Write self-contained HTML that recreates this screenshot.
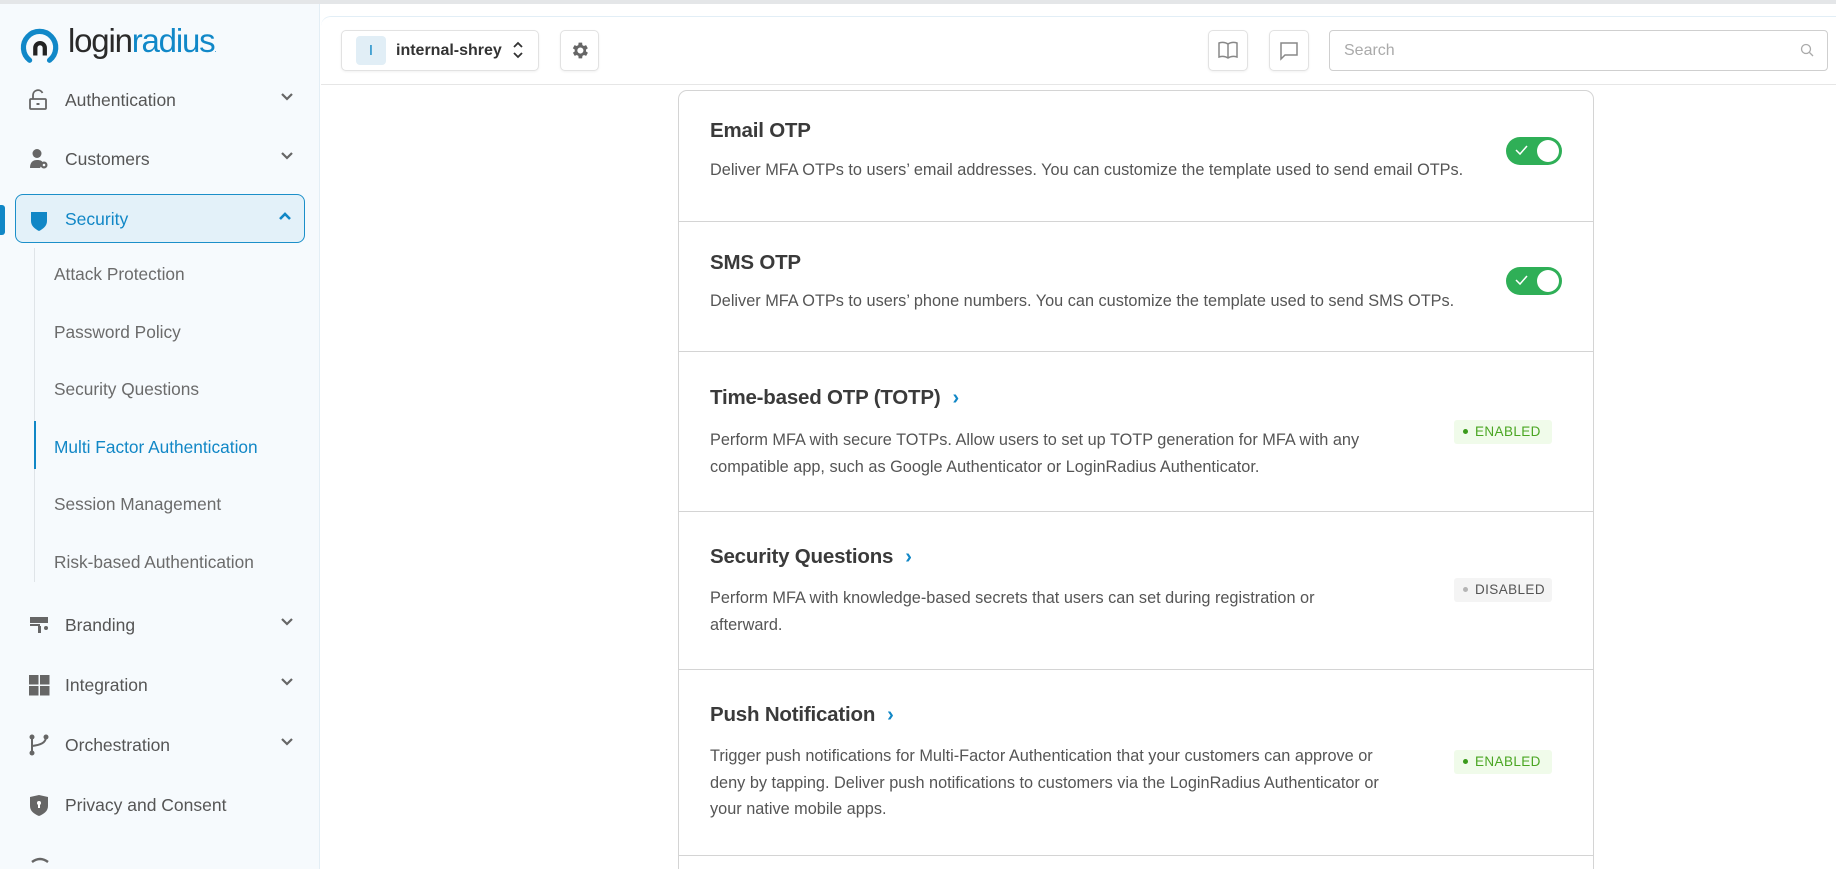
<!DOCTYPE html>
<html><head><meta charset="utf-8">
<style>
*{box-sizing:border-box;margin:0;padding:0}
html{width:1836px;height:869px;overflow:hidden}
body{width:1836px;height:869px;overflow:hidden;background:#fff;font-family:"Liberation Sans",sans-serif;position:relative;color:#3a3a3a}
.abs{position:absolute}
#topline{left:0;top:0;width:1836px;height:4px;background:#e4e6e8}
#side{left:0;top:4px;width:320px;height:865px;background:#f6fafd;border-right:1px solid #e3eef5}
.nav{position:absolute;left:0;width:320px;height:40px;display:flex;align-items:center;font-size:17.5px;color:#555}
.nav .ic{position:absolute;left:28px;top:9px;width:22px;height:22px}
.nav .tx{position:absolute;left:65px}
.nav .chev{position:absolute;left:280px;top:12px}
.sub{position:absolute;left:54px;font-size:17.3px;color:#6b6b6b}
#hdr{left:321px;top:16px;width:1515px;height:69px;background:#fff;border-top:1px solid #e2eef6;border-bottom:1px solid #e6e6e6;border-top-left-radius:10px}
.btn{position:absolute;border:1px solid #e2e2e2;border-radius:5px;background:#fff;box-shadow:0 1px 2px rgba(0,0,0,.06)}
#card{left:678px;top:90px;width:916px;height:790px;border:1px solid #d4d4d4;border-radius:9px;background:#fff}
.sep{position:absolute;left:678px;width:916px;height:1px;background:#d4d4d4}
.ttl{position:absolute;left:710px;font-size:20.5px;font-weight:bold;color:#3a3a3a;letter-spacing:-.2px}
.ttl .ar{color:#1187c6;font-size:20px;margin-left:12px;font-weight:bold}
.dsc{position:absolute;left:710px;font-size:16.3px;line-height:26.5px;color:#555;width:675px}
.tog{position:absolute;left:1506px;width:56px;height:28px;border-radius:14px;background:#2faf57}
.tog::after{content:"";position:absolute;right:3px;top:3px;width:22px;height:22px;border-radius:50%;background:#fff}
.tog svg{position:absolute;left:9px;top:8px}
.badge{position:absolute;left:1454px;width:98px;height:24px;border-radius:3px;font-size:13.5px;letter-spacing:.4px;line-height:24px;padding-left:9px}
.en{background:#f0fbea;color:#4aa622}
.en::before{content:"";display:inline-block;width:5px;height:5px;border-radius:50%;background:#3a9a1a;margin-right:7px;vertical-align:2px}
.di{background:#f4f4f4;color:#555}
.di::before{content:"";display:inline-block;width:5px;height:5px;border-radius:50%;background:#b5b5b5;margin-right:7px;vertical-align:2px}
</style></head><body>
<div id="topline" class="abs"></div>
<div id="side" class="abs"></div>

<svg class="abs" style="left:20px;top:27px" width="42" height="38" viewBox="0 0 44 40">
<path d="M10 35 A17 17 0 1 1 31 35" fill="none" stroke="#1188c8" stroke-width="5.5" stroke-linecap="round"/>
<path d="M16 30 V22 a5 5 0 0 1 10 0 V30" fill="none" stroke="#222" stroke-width="4.5"/>
</svg>
<div class="abs" style="left:68px;top:22px;font-size:33px;letter-spacing:-1.2px;color:#2a2a2a">login<span style="color:#1188c8">radius</span><span style="font-size:8px;color:#1188c8">.</span></div>

<div class="nav" style="top:80px"><svg class="ic" viewBox="0 0 22 22"><path d="M5 10V6a5 5 0 0 1 9.5-2" fill="none" stroke="#666" stroke-width="1.8"/><rect x="2" y="10" width="16" height="10" rx="1" fill="none" stroke="#666" stroke-width="1.8"/><rect x="8.5" y="14" width="3" height="2" fill="#666"/></svg><span class="tx">Authentication</span><svg class="chev" width="14" height="10"><path d="M2 2l5 5 5-5" fill="none" stroke="#666" stroke-width="2.2"/></svg></div>
<div class="nav" style="top:139px"><svg class="ic" viewBox="0 0 22 22"><circle cx="9" cy="5.5" r="4.5" fill="#666"/><path d="M2 20c0-6 3-8 7-8s5 1 6 3l-3 5z" fill="#666"/><circle cx="16" cy="17" r="3.5" fill="#666"/><circle cx="16" cy="17" r="1.3" fill="#f6fafd"/></svg><span class="tx">Customers</span><svg class="chev" width="14" height="10"><path d="M2 2l5 5 5-5" fill="none" stroke="#666" stroke-width="2.2"/></svg></div>
<div class="abs" style="left:0;top:205px;width:5px;height:30px;background:#1187c6;border-radius:0 3px 3px 0"></div>
<div class="abs" style="left:15px;top:194px;width:290px;height:49px;background:#e3f1f9;border:1px solid #1b8fc9;border-radius:8px"></div>
<div class="nav" style="top:199px;color:#1187c6"><svg class="ic" viewBox="0 0 22 22" style="top:10px"><path d="M3 3h16v9c0 5-4 8-8 10-4-2-8-5-8-10z" fill="#1187c6"/></svg><span class="tx">Security</span><svg class="chev" width="14" height="10" style="left:278px"><path d="M2 8l5-5 5 5" fill="none" stroke="#1187c6" stroke-width="2.6"/></svg></div>
<div class="abs" style="left:34px;top:248px;width:1px;height:334px;background:#dfe4e8"></div>
<div class="abs" style="left:34px;top:421px;width:2px;height:48px;background:#1187c6"></div>
<div class="sub" style="top:264px">Attack Protection</div>
<div class="sub" style="top:322px">Password Policy</div>
<div class="sub" style="top:379px">Security Questions</div>
<div class="sub" style="top:437px;color:#1187c6">Multi Factor Authentication</div>
<div class="sub" style="top:494px">Session Management</div>
<div class="sub" style="top:552px">Risk-based Authentication</div>
<div class="nav" style="top:605px"><svg class="ic" viewBox="0 0 22 22"><rect x="2" y="3" width="18" height="6" fill="#666"/><rect x="2" y="10" width="10" height="2" fill="#666"/><rect x="10" y="12" width="3" height="7" fill="#666"/><circle cx="18" cy="14" r="2" fill="#666"/></svg><span class="tx">Branding</span><svg class="chev" width="14" height="10"><path d="M2 2l5 5 5-5" fill="none" stroke="#666" stroke-width="2.2"/></svg></div>
<div class="nav" style="top:665px"><svg class="ic" viewBox="0 0 22 22"><rect x="1" y="1" width="9.5" height="9.5" fill="#666"/><rect x="12" y="1" width="9.5" height="9.5" fill="#666"/><rect x="1" y="12" width="9.5" height="9.5" fill="#666"/><rect x="12" y="12" width="9.5" height="9.5" fill="#666"/></svg><span class="tx">Integration</span><svg class="chev" width="14" height="10"><path d="M2 2l5 5 5-5" fill="none" stroke="#666" stroke-width="2.2"/></svg></div>
<div class="nav" style="top:725px"><svg class="ic" viewBox="0 0 22 22"><circle cx="4" cy="3" r="2.5" fill="#666"/><circle cx="4" cy="19" r="2.5" fill="#666"/><circle cx="18" cy="3" r="2.5" fill="#666"/><path d="M4 3v16M18 3c0 6-6 8-14 9" fill="none" stroke="#666" stroke-width="2"/></svg><span class="tx">Orchestration</span><svg class="chev" width="14" height="10"><path d="M2 2l5 5 5-5" fill="none" stroke="#666" stroke-width="2.2"/></svg></div>
<div class="nav" style="top:785px"><svg class="ic" viewBox="0 0 22 22"><path d="M2 3l9-2 9 2v9c0 5-4 8-9 10-5-2-9-5-9-10z" fill="#666"/><circle cx="11" cy="9" r="2" fill="#fff"/><rect x="10" y="9" width="2" height="5" fill="#fff"/></svg><span class="tx">Privacy and Consent</span></div>
<svg class="abs" style="left:30px;top:856px" width="20" height="8"><path d="M2 6 Q10 0 18 6" fill="none" stroke="#666" stroke-width="2.5"/></svg>

<div id="hdr" class="abs"></div>
<div class="btn" style="left:341px;top:30px;width:198px;height:41px"></div>
<div class="abs" style="left:356px;top:36px;width:30px;height:29px;background:#e1eef6;border-radius:4px;color:#1187c6;font-size:15px;text-align:center;line-height:29px">I</div>
<div class="abs" style="left:396px;top:42px;font-size:16px;font-weight:bold;color:#333">internal-shrey</div>
<svg class="abs" style="left:512px;top:40px" width="12" height="20"><path d="M2 7l4-4 4 4M2 13l4 4 4-4" fill="none" stroke="#333" stroke-width="1.8"/></svg>
<div class="btn" style="left:560px;top:30px;width:39px;height:41px"></div>
<svg class="abs" style="left:569px;top:40px" width="21" height="21" viewBox="0 0 24 24"><path fill="#666" d="M19.4 13a7.5 7.5 0 0 0 0-2l2.1-1.6-2-3.5-2.5 1a7.6 7.6 0 0 0-1.7-1L15 3h-4l-.4 2.9a7.6 7.6 0 0 0-1.7 1l-2.5-1-2 3.5L6.6 11a7.5 7.5 0 0 0 0 2l-2.1 1.6 2 3.5 2.5-1a7.6 7.6 0 0 0 1.7 1L11 21h4l.4-2.9a7.6 7.6 0 0 0 1.7-1l2.5 1 2-3.5zM13 15.5a3.5 3.5 0 1 1 0-7 3.5 3.5 0 0 1 0 7z"/></svg>
<div class="btn" style="left:1208px;top:30px;width:40px;height:41px"></div>
<svg class="abs" style="left:1217px;top:40px" width="22" height="20" viewBox="0 0 22 20"><path d="M11 4C8 2 5 2 2 3v14c3-1 6-1 9 1 3-2 6-2 9-1V3c-3-1-6-1-9 1zM11 4v14" fill="none" stroke="#888" stroke-width="1.5"/></svg>
<div class="btn" style="left:1269px;top:30px;width:40px;height:41px"></div>
<svg class="abs" style="left:1279px;top:41px" width="20" height="20" viewBox="0 0 20 20"><path d="M2 2h16v12H6l-4 4z" fill="none" stroke="#888" stroke-width="1.5"/></svg>
<div class="abs" style="left:1329px;top:30px;width:499px;height:41px;border:1px solid #cfcfcf;border-radius:4px"></div>
<div class="abs" style="left:1344px;top:42px;font-size:16px;color:#aaa">Search</div>
<svg class="abs" style="left:1800px;top:43px" width="14" height="14"><circle cx="6" cy="6" r="4.5" fill="none" stroke="#aaa" stroke-width="1.3"/><path d="M9.5 9.5l3.5 3.5" stroke="#aaa" stroke-width="1.3"/></svg>

<div id="card" class="abs"></div>
<div class="sep" style="top:221px"></div>
<div class="sep" style="top:351px"></div>
<div class="sep" style="top:511px"></div>
<div class="sep" style="top:669px"></div>
<div class="sep" style="top:855px"></div>

<div class="ttl" style="top:119px">Email OTP</div>
<div class="dsc" style="top:157px;width:860px">Deliver MFA OTPs to users’ email addresses. You can customize the template used to send email OTPs.</div>
<div class="tog" style="top:137px"><svg width="13" height="11"><path d="M1 5l4 4 7-8" fill="none" stroke="#fff" stroke-width="1.5"/></svg></div>

<div class="ttl" style="top:251px">SMS OTP</div>
<div class="dsc" style="top:288px;width:860px">Deliver MFA OTPs to users’ phone numbers. You can customize the template used to send SMS OTPs.</div>
<div class="tog" style="top:267px"><svg width="13" height="11"><path d="M1 5l4 4 7-8" fill="none" stroke="#fff" stroke-width="1.5"/></svg></div>

<div class="ttl" style="top:386px">Time-based OTP (TOTP)<span class="ar">›</span></div>
<div class="dsc" style="top:427px">Perform MFA with secure TOTPs. Allow users to set up TOTP generation for MFA with any compatible app, such as Google Authenticator or LoginRadius Authenticator.</div>
<div class="badge en" style="top:420px">ENABLED</div>

<div class="ttl" style="top:545px">Security Questions<span class="ar">›</span></div>
<div class="dsc" style="top:585px">Perform MFA with knowledge-based secrets that users can set during registration or afterward.</div>
<div class="badge di" style="top:578px">DISABLED</div>

<div class="ttl" style="top:703px">Push Notification<span class="ar">›</span></div>
<div class="dsc" style="top:743px">Trigger push notifications for Multi-Factor Authentication that your customers can approve or deny by tapping. Deliver push notifications to customers via the LoginRadius Authenticator or your native mobile apps.</div>
<div class="badge en" style="top:750px">ENABLED</div>
</body></html>
